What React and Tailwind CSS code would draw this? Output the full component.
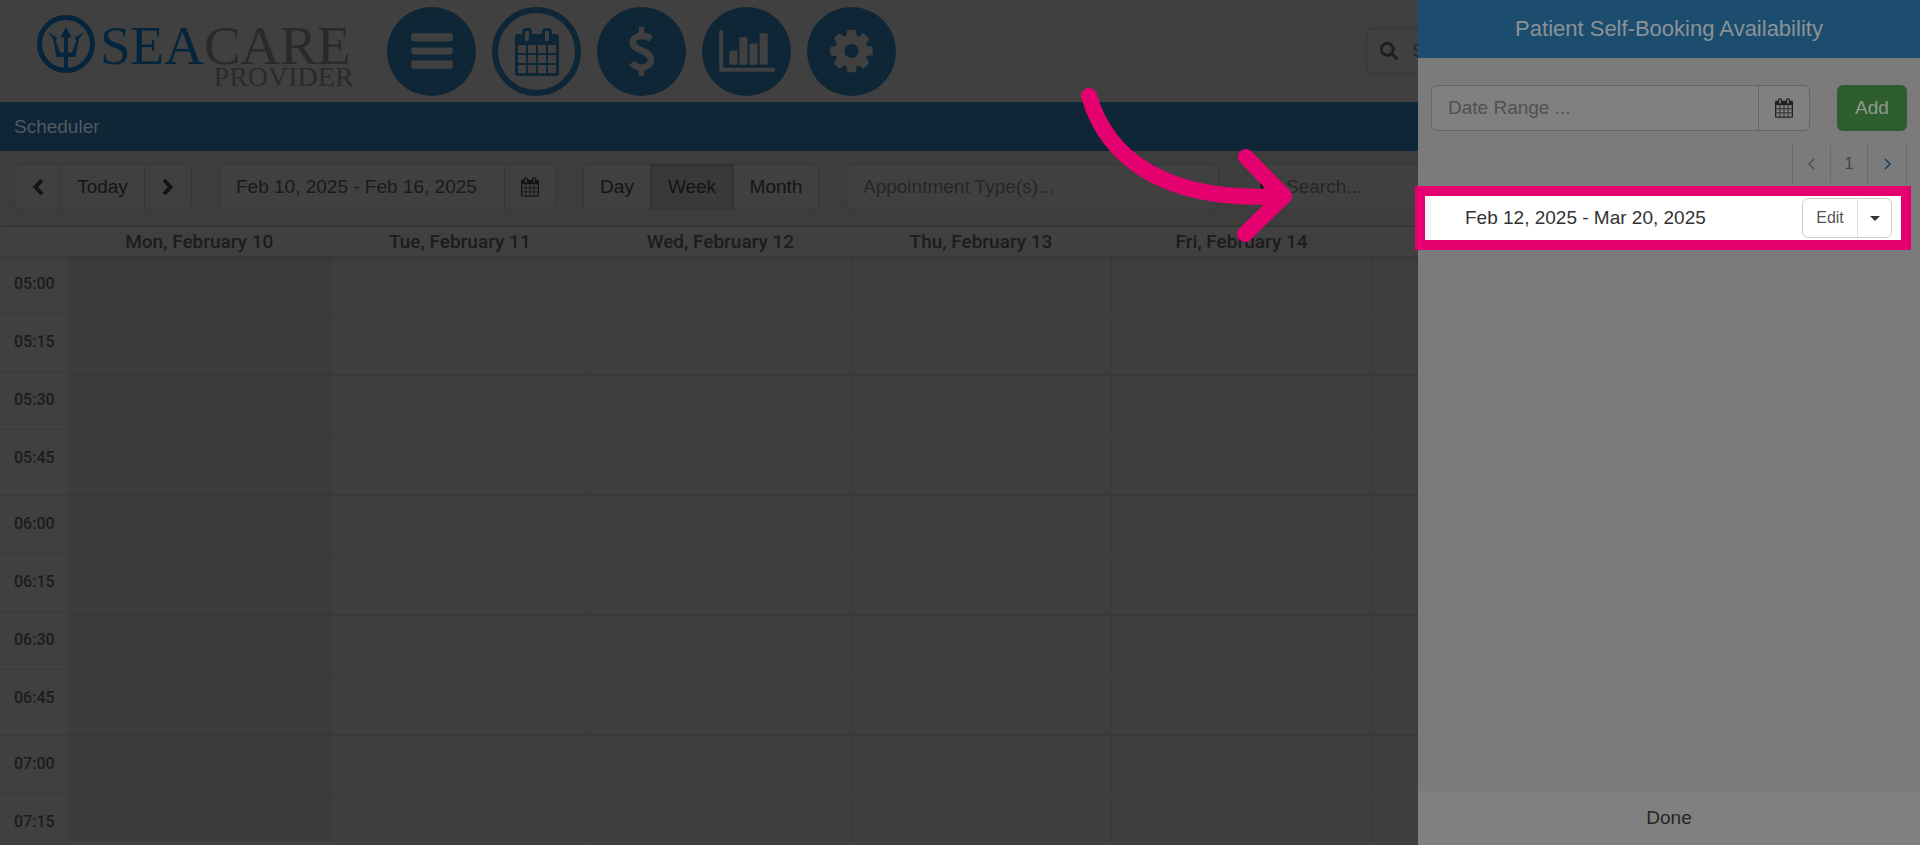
import React from 'react';
import { FaSearch } from 'react-icons/fa';

const days = [
  'Mon, February 10',
  'Tue, February 11',
  'Wed, February 12',
  'Thu, February 13',
  'Fri, February 14',
  'Sat, February 15',
  'Sun, February 16',
];

const times = ['05:00', '05:15', '05:30', '05:45', '06:00', '06:15', '06:30', '06:45', '07:00', '07:15'];

const BarsIcon = () => (
  <svg viewBox="0 0 88 88" className="w-full h-full" fill="currentColor">
    <rect x="24" y="26" width="41" height="8" rx="2" />
    <rect x="24" y="40" width="41" height="7" rx="2" />
    <rect x="24" y="53" width="41" height="8" rx="2" />
  </svg>
);

const CalendarIcon = ({ className }) => (
  <svg viewBox="0 0 44 48" className={className}>
    <rect x="0" y="6" width="44" height="42" rx="3" fill="currentColor" />
    <rect x="7" y="0" width="10" height="14" rx="4" fill="currentColor" />
    <rect x="27" y="0" width="10" height="14" rx="4" fill="currentColor" />
    <g className="fill-[var(--hole)]">
      <rect x="10" y="3" width="4" height="10" rx="1" />
      <rect x="30" y="3" width="4" height="10" rx="1" />
      {[17, 27, 37].map((y) =>
        [3, 13, 23, 33].map((x) => <rect key={`${x}-${y}`} x={x} y={y} width="8" height="8" />)
      )}
    </g>
  </svg>
);

const DollarIcon = () => (
  <svg viewBox="0 0 88 88" className="w-full h-full" fill="none" stroke="currentColor">
    <path d="M44 19.500v8M44 60v8" strokeWidth="5.500" />
    <path d="M53.500 31.500C50.500 29.500 47 28.700 44 28.700c-5 0-8.500 2.600-8.500 6.500 0 4.300 3.800 6 8.500 7.700 5.500 2 9.300 4.400 9.300 9.300 0 4.800-4 7.600-9.300 7.600-4.200 0-7.300-1.800-9.800-4.600" strokeWidth="6.500" />
  </svg>
);

const ChartIcon = () => (
  <svg viewBox="0 0 88 88" className="w-full h-full" fill="currentColor">
    <path d="M17 24a1 1 0 0 1 1-1h2a1 1 0 0 1 1 1v36h50a1 1 0 0 1 1 1v2a1 1 0 0 1-1 1H18a1 1 0 0 1-1-1z" />
    <rect x="27" y="43" width="8" height="14" rx="1" />
    <rect x="37" y="30" width="8" height="27" rx="1" />
    <rect x="47" y="36" width="8" height="21" rx="1" />
    <rect x="57" y="26" width="8" height="31" rx="1" />
  </svg>
);

const CogIcon = () => (
  <svg viewBox="0 0 88 88" className="w-full h-full" fill="currentColor">
    <circle cx="44" cy="43.500" r="11.500" fill="none" stroke="currentColor" strokeWidth="9" />
    {[0, 45, 90, 135, 180, 225, 270, 315].map((angle) => (
      <path key={angle} d="M38.500 30l1.300-6.500q.2-1 1.200-1h6q1 0 1.200 1l1.300 6.500z" transform={`rotate(${angle} 44 43.500)`} />
    ))}
  </svg>
);

const ArrowGlyph = ({ d }) => (
  <svg viewBox="0 0 12 18" className="h-[18px] w-3" fill="none" stroke="currentColor" strokeWidth="4">
    <path d={d} />
  </svg>
);

const Chevron = ({ className, d }) => (
  <svg viewBox="0 0 9 12" className={`h-3 w-[9px] ${className}`} fill="none" stroke="currentColor" strokeWidth="1.6">
    <path d={d} />
  </svg>
);

const Caret = () => (
  <svg viewBox="0 0 10 5" className="h-[5px] w-[10px]" fill="currentColor">
    <path d="M0 0h10L5 5z" />
  </svg>
);

const Logo = () => (
  <a href="#" aria-label="SeaCare Provider" className="flex w-[319px] items-start font-['Liberation_Serif',serif]">
    <svg viewBox="0 0 58 58" className="w-[58px] h-[58px] text-[#04253c]" fill="currentColor">
      <circle cx="29" cy="29" r="26.500" fill="none" stroke="currentColor" strokeWidth="5" />
      <path d="M29 12l5.500 10.500H31V54h-4V22.500h-3.500z" />
      <path d="M11 17l9.500 6-2 2 4.500 12.500h12L39.500 25l-2-2 9.500-6-5 6.500-3.500 18.500h-19L16 23.500z" />
    </svg>
    <span className="ml-[5px] flex flex-col items-end pt-[10px]">
      <span className="pr-[3px] text-[55px] leading-[42px] text-[#2a2a2a]">
        <span className="text-[#04253c]">SEA</span>CARE
      </span>
      <span className="text-[28px] leading-[20px] text-[#2a2a2a]">PROVIDER</span>
    </span>
  </a>
);

const NavButton = ({ label, active, children }) => (
  <button
    aria-label={label}
    className={
      active
        ? 'flex h-[89px] w-[89px] items-center justify-center rounded-full border-[6px] border-[#0e2636] text-[#0e2636]'
        : 'flex h-[89px] w-[89px] items-center justify-center rounded-full bg-[#0e2636] text-[#404040]'
    }
  >
    {children}
  </button>
);

const Header = () => (
  <header className="flex h-[102px] items-start justify-between bg-[#404040]">
    <div className="flex pl-[37px]">
      <div className="pt-[15px]">
        <Logo />
      </div>
      <nav className="ml-[31px] flex gap-4 pt-[7px]">
        <NavButton label="Menu"><BarsIcon /></NavButton>
        <NavButton label="Calendar" active><CalendarIcon className="w-11 h-12 [--hole:#404040]" /></NavButton>
        <NavButton label="Billing"><DollarIcon /></NavButton>
        <NavButton label="Reports"><ChartIcon /></NavButton>
        <NavButton label="Settings"><CogIcon /></NavButton>
      </nav>
    </div>
    <label className="mt-7 mr-[14px] flex h-[46px] w-[540px] items-center gap-[14px] rounded-md border border-[#363636] pl-[13px]">
      <FaSearch className="h-[18px] w-[18px] shrink-0 text-[#1c1e20]" />
      <input type="text" aria-label="Search patients" placeholder="Search..." className="w-full bg-transparent text-[19px] placeholder:text-[#262626] outline-none" />
    </label>
  </header>
);

const Toolbar = () => (
  <div className="flex items-center gap-[27px] border-b-2 border-[#393939] bg-[#3d3d3d] px-[14px] pt-[13px] pb-[15px] text-[19px] text-[#141414]">
    <div className="flex h-[46px] shrink-0 divide-x divide-[#363636] rounded-md border border-[#363636] bg-[#404040]">
      <button aria-label="Previous" className="w-[46px] flex items-center justify-center"><ArrowGlyph d="M10 2L3.500 9l6.500 7" /></button>
      <button className="w-[84px]">Today</button>
      <button aria-label="Next" className="w-[46px] flex items-center justify-center"><ArrowGlyph d="M2 2l6.500 7L2 16" /></button>
    </div>
    <div className="flex h-[46px] w-[337px] shrink-0 divide-x divide-[#363636] rounded-md border border-[#363636] bg-[#404040]">
      <input type="text" aria-label="Date range" defaultValue="Feb 10, 2025 - Feb 16, 2025" className="min-w-0 flex-1 pl-4 bg-transparent text-[#1a1a1a] outline-none" />
      <button aria-label="Open calendar" className="flex w-[50px] items-center justify-center"><CalendarIcon className="h-5 w-[18px] [--hole:#404040]" /></button>
    </div>
    <div className="flex h-[46px] shrink-0 rounded-md border border-[#363636] bg-[#404040]">
      <button className="w-[66px]">Day</button>
      <button className="-my-px w-[84px] border border-[#303030] bg-[#393939] shadow-inner">Week</button>
      <button className="w-[84px]">Month</button>
    </div>
    <div className="flex h-[46px] w-[373px] shrink-0 items-center rounded-md border border-[#363636] bg-[#404040] pr-2">
      <input type="text" aria-label="Appointment types" placeholder="Appointment Type(s)..." className="min-w-0 flex-1 pl-4 bg-transparent placeholder:text-[#262626] outline-none" />
      <Caret />
    </div>
    <label className="flex h-[46px] min-w-0 flex-1 items-center gap-2 rounded-md border border-[#363636] bg-[#404040] pl-[13px]">
      <FaSearch className="h-[18px] w-[18px] shrink-0" />
      <input type="text" aria-label="Search appointments" placeholder="Search..." className="min-w-0 flex-1 bg-transparent placeholder:text-[#262626] outline-none" />
    </label>
  </div>
);

const Calendar = () => (
  <div className="flex min-h-0 flex-1 flex-col bg-[#404040] font-[Roboto,sans-serif] text-[#1c1c1c]">
    <div className="relative grid grid-cols-[69px_repeat(7,1fr)] pr-[27px] text-[19px] font-medium leading-[29px] shadow-[0_2px_6px_rgba(0,0,0,0.15)]">
      <span />
      {days.map((day) => (
        <span key={day} className="text-center">{day}</span>
      ))}
    </div>
    <div className="grid min-h-0 flex-1 grid-cols-[69px_repeat(7,1fr)] overflow-hidden pr-[27px] mb-1">
      <div>
        {times.map((time) => (
          <div
            key={time}
            className={
              time.endsWith('45')
                ? 'h-[66px] border-b border-[#393939] pl-[14px] pt-4 text-base font-medium'
                : 'h-[58px] border-b border-[#393939] pl-[14px] pt-4 text-base font-medium'
            }
          >
            {time}
          </div>
        ))}
      </div>
      {days.map((day, i) => (
        <div key={day} className={i === 0 ? 'border-l border-[#393939] bg-[#3c3c3c]' : 'border-l border-[#393939] bg-[#3e3e3e]'}>
          {times.map((time, row) => (
            <div key={time} className={row % 2 ? 'h-[60px] border-b-2 border-[#393939]' : 'h-[60px] border-b border-[#393939]'} />
          ))}
        </div>
      ))}
    </div>
  </div>
);

const SidePanel = () => (
  <aside className="absolute inset-y-0 right-0 flex w-[502px] flex-col bg-[#7b7b7b]">
    <h2 className="h-[58px] shrink-0 bg-[#1c4d6e] text-center text-[22px] leading-[57px] text-[#8b9297]">
      Patient Self-Booking Availability
    </h2>
    <div className="flex justify-between pt-[27px] pl-[13px] pr-[13px]">
      <div className="flex h-[46px] w-[379px] divide-x divide-[#666666] rounded-md border border-[#666666] bg-[#808080]">
        <input type="text" aria-label="Date Range" placeholder="Date Range ..." className="min-w-0 flex-1 pl-4 text-[19px] placeholder:text-[#505050] outline-none" />
        <button aria-label="Open calendar" className="flex w-[50px] items-center justify-center text-[#1f1f1f]"><CalendarIcon className="h-5 w-[18px] [--hole:#808080]" /></button>
      </div>
      <button className="h-[46px] w-[70px] rounded-md bg-[#2e5e2e] text-[19px] text-[#929b92]">Add</button>
    </div>
    <div className="mt-[14px] mr-[13px] flex h-[38px] divide-x divide-[#6a6a6a] self-end border-x border-[#6a6a6a] text-base text-[#444444]">
      <button aria-label="Previous page" className="flex w-[38px] items-center justify-center"><Chevron className="text-[#555555]" d="M7 1L2 6l5 5" /></button>
      <button className="w-[37px]">1</button>
      <button aria-label="Next page" className="flex w-[38px] items-center justify-center"><Chevron className="text-[#1b3f5c]" d="M2 1l5 5-5 5" /></button>
    </div>
    {/* highlighted availability row */}
    <div className="relative -ml-[3px] mr-[9px] mt-[3px] flex h-16 items-center justify-between border-[10px] border-[#e5006f] bg-white pr-[9px]">
      <div className="flex h-full items-center border-l-[6px] border-[#f5f5f5] pl-[34px] text-[19px] text-[#333333]">
        Feb 12, 2025 - Mar 20, 2025
      </div>
      <div className="flex h-10 divide-x divide-[#dddddd] rounded-md border border-[#cccccc]">
        <button className="w-[55px] text-base text-[#555555]">Edit</button>
        <button aria-label="More actions" className="flex w-[33px] items-center justify-center text-[#333333]">
          <Caret />
        </button>
      </div>
    </div>
    <button className="mt-auto h-[54px] bg-[#808080] text-[19px] text-[#262626]">Done</button>
  </aside>
);

const Arrow = () => (
  <svg viewBox="0 0 212 156" className="pointer-events-none absolute left-[1080px] top-[87px] h-[156px] w-[212px]" fill="none" stroke="#e5006f" strokeWidth="16" strokeLinecap="round" strokeLinejoin="round">
    <path d="M9 9C25 64 76 117 204 109" />
    <path d="M166 70l38 39-39 38" />
  </svg>
);

const App = () => (
  <div className="relative flex h-screen flex-col overflow-hidden bg-[#404040] font-['Liberation_Sans',Arial,sans-serif]">
    <Header />
    <h1 className="h-[49px] shrink-0 bg-[#0e2636] pl-[14px] text-[19px] leading-[49px] text-[#505a61]">Scheduler</h1>
    <Toolbar />
    <Calendar />
    <SidePanel />
    <Arrow />
  </div>
);

export default App;
